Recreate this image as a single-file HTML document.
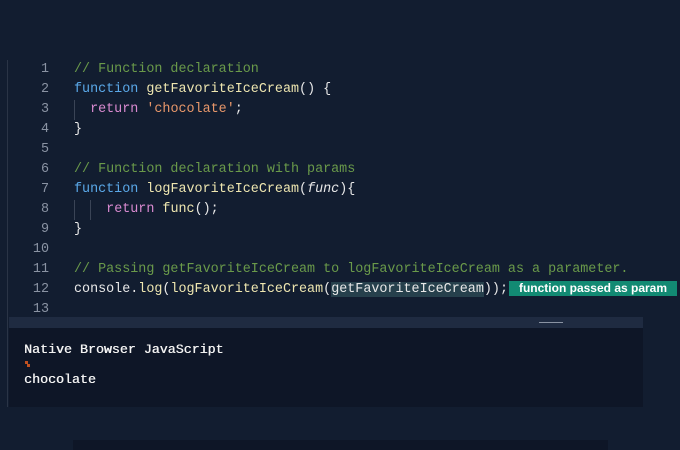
<!DOCTYPE html>
<html><head><style>
body{margin:0;width:680px;height:450px;background:#121d30;overflow:hidden;position:relative;font-family:"Liberation Mono",monospace}
.bl{position:absolute;left:7px;top:60px;width:1px;height:347px;background:#2a3446}
.ln{position:absolute;left:0;width:49px;text-align:right;color:#8a93a3;font-size:13.4px;line-height:20px}
.cd{position:absolute;left:74px;color:#e8e8e8;font-size:13.4px;line-height:20px;white-space:pre}
.c{color:#6a9a4a}.k{color:#5aa8e8}.f{color:#eee6b0}.r{color:#d98ad0}.s{color:#e8976a}
.g{position:absolute;width:1px;height:20px;background:#3a4456}
.hl{background:#26404c}
.badge{position:absolute;left:509px;top:281px;width:168px;height:15px;background:#128a73;color:#fff;font:bold 12px "Liberation Sans",sans-serif;line-height:15px;text-align:center}
.bar{position:absolute;left:9px;top:317px;width:634px;height:11px;background:#1f2b41}
.bar i{position:absolute;left:530px;top:5px;width:24px;height:1px;background:#8a93a3}
.con{position:absolute;left:9px;top:328px;width:634px;height:79px;background:#0e1627}
.ct{position:absolute;left:24px;color:#f2f2f2;font:13.3px "Liberation Mono",monospace;line-height:15px;text-shadow:0.4px 0 0 #f2f2f2}
.btm{position:absolute;left:73px;top:440px;width:535px;height:10px;background:#0e1627}
</style></head><body>
<div class="bl"></div>
<div class="ln" style="top:60px">1<br>2<br>3<br>4<br>5<br>6<br>7<br>8<br>9<br>10<br>11<br>12<br>13</div>
<div class="g" style="left:74px;top:100px"></div>
<div class="g" style="left:74px;top:200px"></div>
<div class="g" style="left:90px;top:200px"></div>
<div class="cd" style="top:60px"><span class="c">// Function declaration</span>
<span class="k">function</span> <span class="f">getFavoriteIceCream</span>() {
  <span class="r">return</span> <span class="s">'chocolate'</span>;
}

<span class="c">// Function declaration with params</span>
<span class="k">function</span> <span class="f">logFavoriteIceCream</span>(<i>func</i>){
    <span class="r">return</span> <span class="f">func</span>();
}

<span class="c">// Passing getFavoriteIceCream to logFavoriteIceCream as a parameter.</span>
console.<span class="f">log</span>(<span class="f">logFavoriteIceCream</span>(<span class="hl">getFavoriteIceCream</span>));
</div>
<div class="badge">function passed as param</div>
<div class="bar"><i></i></div>
<div class="con"></div>
<div class="ct" style="top:342px">Native Browser JavaScript</div>
<div style="position:absolute;left:25px;top:361px;width:3px;height:3px;background:#c05020"></div>
<div style="position:absolute;left:27px;top:364px;width:3px;height:3px;background:#c05020"></div>
<div class="ct" style="top:372px">chocolate</div>
<div class="btm"></div>
</body></html>
